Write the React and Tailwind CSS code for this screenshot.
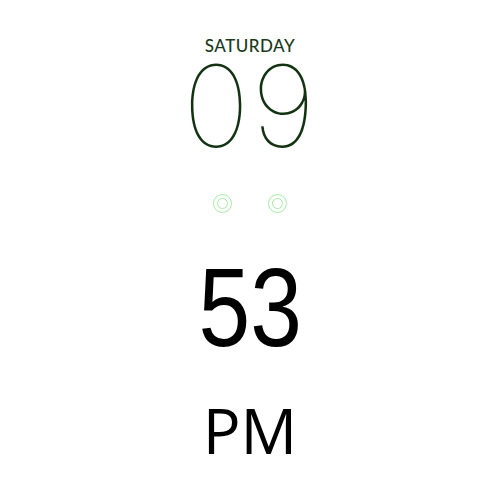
import React from 'react';

const Dot = () => (
  <div className="w-[19px] h-[19px] rounded-full border-[1.5px] border-[#a6eca6] flex items-center justify-center">
    <div className="w-[11px] h-[11px] rounded-full border-[1.5px] border-[#a6eca6]" />
  </div>
);

const App = () => {
  return (
    <div className="w-[500px] h-[500px] bg-white flex flex-col items-center">
      {/* date */}
      <div className="mt-[37px] text-[17px] leading-none tracking-[0.5px] text-[#1b3a1b] font-['Lato',sans-serif] font-medium">
        SATURDAY
      </div>
      <div className="mt-[7px] text-[113px] leading-[0.8] font-thin text-[#123212] font-['Inter',sans-serif] tracking-[2px]">
        09
      </div>

      {/* seconds separator */}
      <div className="mt-[43px] flex gap-[36px]">
        <Dot />
        <Dot />
      </div>

      {/* minutes */}
      <div className="mt-[39px] text-[112px] leading-none text-black font-['Liberation_Sans',sans-serif] scale-x-[0.83]">
        53
      </div>

      <div className="mt-[34px] text-[63px] leading-none text-black font-['Open_Sans',sans-serif]">
        PM
      </div>
    </div>
  );
};

export default App;
